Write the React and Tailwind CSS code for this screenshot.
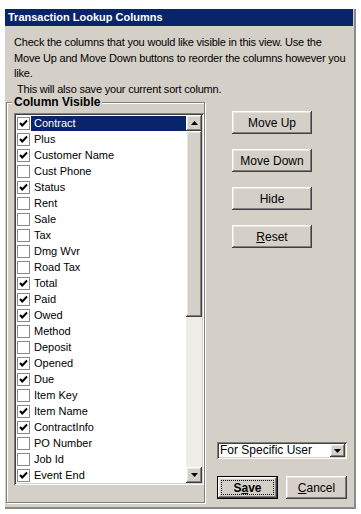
import React from "react";

const items = [
  ["Contract", true],
  ["Plus", true],
  ["Customer Name", true],
  ["Cust Phone", false],
  ["Status", true],
  ["Rent", false],
  ["Sale", false],
  ["Tax", false],
  ["Dmg Wvr", false],
  ["Road Tax", false],
  ["Total", true],
  ["Paid", true],
  ["Owed", true],
  ["Method", false],
  ["Deposit", false],
  ["Opened", true],
  ["Due", true],
  ["Item Key", false],
  ["Item Name", true],
  ["ContractInfo", true],
  ["PO Number", false],
  ["Job Id", false],
  ["Event End", true],
];

const raised =
  "shadow-[inset_-1px_-1px_#404040,inset_1px_1px_#ffffff,inset_-2px_-2px_#808080,inset_2px_2px_#e8e6e0]";
const sunken =
  "shadow-[inset_1px_1px_#808080,inset_-1px_-1px_#ffffff,inset_2px_2px_#404040,inset_-2px_-2px_#d4d0c8]";

function Check({ on }) {
  return (
    <div className="w-[13px] h-[13px] border border-[#8a8a8a] bg-white flex items-center justify-center shrink-0">
      {on && (
        <svg width="11" height="11" viewBox="0 0 11 11">
          <polyline points="2,5 4.3,7.5 9,2.5" fill="none" stroke="#000" strokeWidth="2" />
        </svg>
      )}
    </div>
  );
}

function Arrow({ up }) {
  return (
    <div className={`w-[16px] h-[16px] bg-[#d4d0c8] flex items-center justify-center ${raised}`}>
      <svg width="7" height="4" viewBox="0 0 7 4">
        {up ? <polygon points="3.5,0 7,4 0,4" fill="#000" /> : <polygon points="0,0 7,0 3.5,4" fill="#000" />}
      </svg>
    </div>
  );
}

function Btn({ children, className = "w-[80px]" }) {
  return (
    <div
      className={`h-[23px] bg-[#d4d0c8] flex items-center justify-center text-[12px] text-black ${raised} ${className}`}
    >
      {children}
    </div>
  );
}

export default function App() {
  return (
    <div
      className="w-[361px] h-[514px] bg-white pt-[9px] pl-[5px]"
      style={{ fontFamily: '"Liberation Sans", Arial, sans-serif' }}
    >
      <div className="w-[351px] h-[500px] bg-[#d4d0c8] border-r-2 border-b-2 border-[#8a8a8a] flex flex-col">
        <div className="h-[17px] bg-[#0a246a] text-white font-bold text-[11px] leading-[17px] pl-[3px] mr-[1px]">
          Transaction Lookup Columns
        </div>
        <div className="pl-[9px] pt-[9px] text-[11px] leading-[15.5px] text-black tracking-[-0.2px]">
          <div>Check the columns that you would like visible in this view. Use the</div>
          <div>Move Up and Move Down buttons to reorder the columns however you</div>
          <div>like.</div>
          <div className="pl-[3px]">This will also save your current sort column.</div>
        </div>
        <div className="flex mt-[5px]">
          <div className="ml-[1px] w-[199px] h-[401px] border border-[#808080] shadow-[inset_1px_1px_#ffffff,1px_1px_#ffffff] pl-[7px] flex flex-col">
            <div className="-mt-[8px] -ml-[2px] px-[2px] self-start bg-[#d4d0c8] font-bold text-[12px] leading-[14px] text-black">
              Column Visible
            </div>
            <div className={`mt-[4px] w-[190px] h-[372px] bg-white p-[2px] flex ${sunken}`}>
              <div className="flex-1 flex flex-col">
                {items.map(([name, on], i) => (
                  <div key={name} className="h-[16px] flex items-center">
                    <div className="ml-[1px]">
                      <Check on={on} />
                    </div>
                    <div
                      className={`flex-1 h-[15px] ml-[1px] pl-[3px] text-[11px] leading-[15px] ${
                        i === 0 ? "bg-[#0a246a] text-white" : "text-black"
                      }`}
                    >
                      {name}
                    </div>
                  </div>
                ))}
              </div>
              <div className="w-[16px] flex flex-col bg-[#eeede8]">
                <Arrow up />
                <div className={`h-[186px] bg-[#d4d0c8] ${raised}`} />
                <div className="flex-1" />
                <Arrow />
              </div>
            </div>
          </div>
          <div className="flex flex-col">
            <div className="ml-[27px] mt-[9px] flex flex-col gap-[15px]">
              <Btn>Move Up</Btn>
              <Btn>Move Down</Btn>
              <Btn>Hide</Btn>
              <Btn>
                <span>
                  <span className="underline">R</span>eset
                </span>
              </Btn>
            </div>
            <div className={`ml-[12px] mt-[194px] w-[130px] h-[17px] bg-white p-[2px] flex items-center ${sunken}`}>
              <div className="flex-1 text-[12px] leading-[13px] pl-[1px] text-black">For Specific User</div>
              <div className={`w-[15px] h-[13px] bg-[#d4d0c8] flex items-center justify-center ${raised}`}>
                <svg width="7" height="4" viewBox="0 0 7 4">
                  <polygon points="0,0 7,0 3.5,4" fill="#000" />
                </svg>
              </div>
            </div>
            <div className="ml-[12px] mt-[17px] flex gap-[8px]">
              <div className="w-[61px] h-[23px] border border-black">
                <div className={`w-full h-full bg-[#d4d0c8] p-[3px] ${raised}`}>
                  <div className="w-full h-full border border-dotted border-black flex items-center justify-center font-bold text-[12px] text-black">
                    <span>
                      S<span className="underline">a</span>ve
                    </span>
                  </div>
                </div>
              </div>
              <Btn className="w-[61px]">
                <span>
                  <span className="underline">C</span>ancel
                </span>
              </Btn>
            </div>
          </div>
        </div>
      </div>
    </div>
  );
}
